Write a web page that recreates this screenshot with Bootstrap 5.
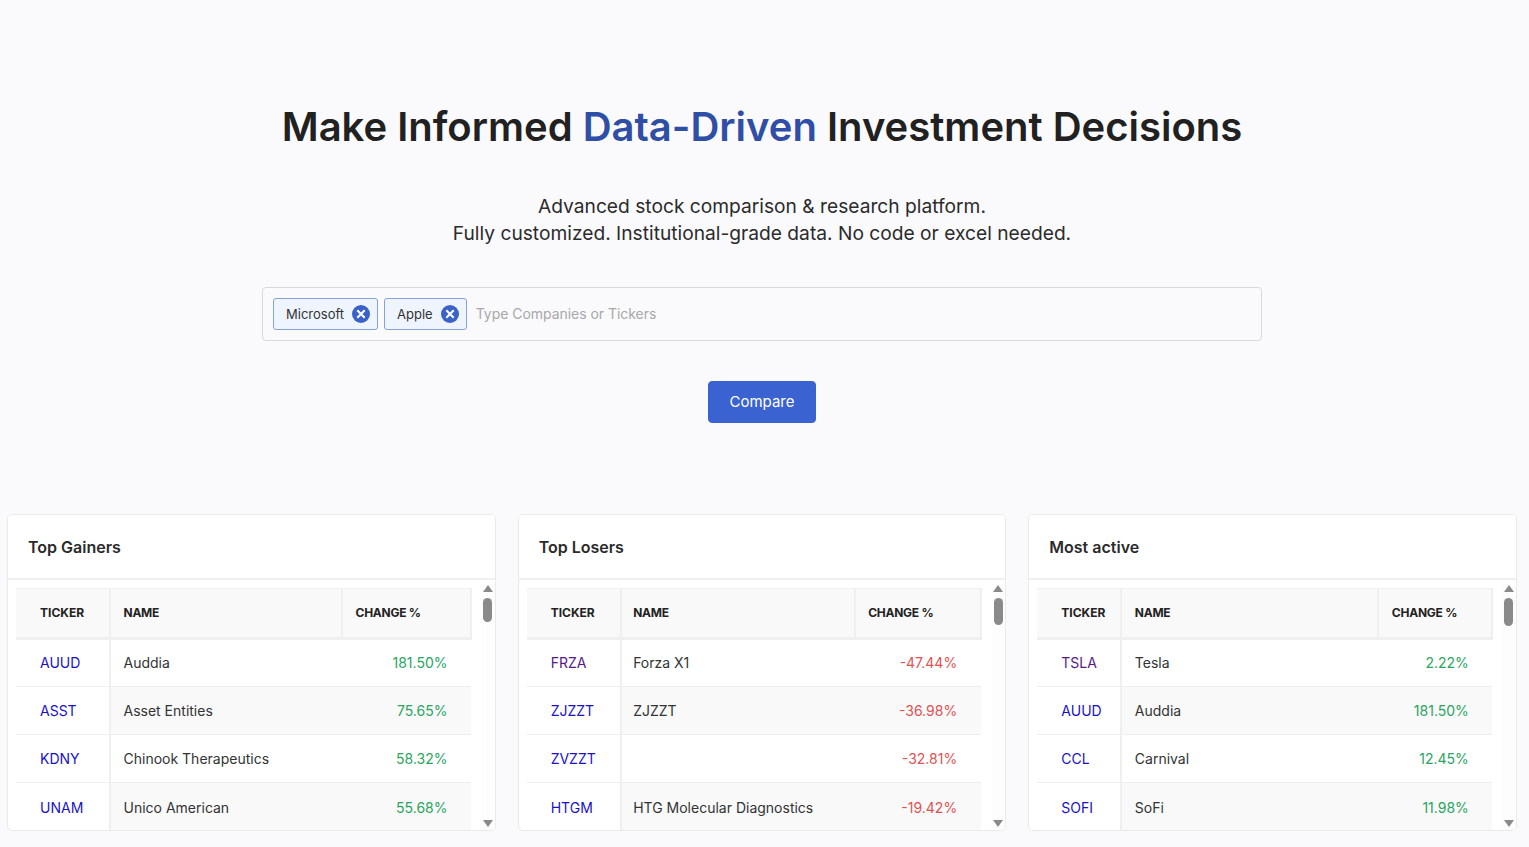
<!doctype html>
<html lang="en">

<head>
    <meta charset="utf-8">
    <meta name="viewport" content="width=device-width, initial-scale=1">
    <title>Stock Compare</title>
    <link href="https://cdn.jsdelivr.net/npm/bootstrap@5.3.0/dist/css/bootstrap.min.css" rel="stylesheet">
    <style>
        body {
            background-color: #fafafc;
            font-family: "Inter", "Liberation Sans", sans-serif;
            color: #212529;
            overflow: hidden;
        }

        .page-wrap {
            width: 1524px;
            padding: 0 7px;
        }

        .hero-title {
            font-size: 40px;
            font-weight: 600;
            line-height: 48px;
            margin: 103px 0 0;
            color: #212121;
        }

        .hero-title span {
            color: #2f4ea6;
        }

        .hero-sub {
            font-size: 19.2px;
            line-height: 27px;
            margin: 42px 0 0;
            color: #2b2b2b;
        }

        .search-box {
            width: 1000px;
            height: 54px;
            margin: 40px auto 0;
            padding: 0 10px;
            border: 1px solid #d8d9de;
            border-radius: 4px;
            gap: 6px;
        }

        .chip {
            height: 32px;
            padding: 1px 7px 0 12px;
            background-color: #eef5fe;
            border: 1px solid #84a3dc;
            border-radius: 3px;
            font-size: 13px;
            color: #333;
            gap: 8px;
        }

        .chip svg {
            width: 18px;
            height: 18px;
            margin-top: -1px;
        }

        .placeholder-text {
            font-size: 14px;
            letter-spacing: -.04px;
            color: #a8a8a8;
            margin: -1px 0 0 3px;
        }

        .compare-btn {
            width: 108px;
            height: 42px;
            margin-top: 40px;
            font-size: 15px;
            background-color: #3a62d1;
            border-color: #3a62d1;
            border-radius: 4px;
        }

        .boards {
            display: grid;
            grid-template-columns: repeat(3, 1fr);
            gap: 22px;
            margin-top: 91px;
        }

        .board {
            height: 317px;
            border: 1px solid #e9e9ee;
            border-radius: 5px;
            overflow: hidden;
            background-color: #fff;
        }

        .board-head {
            height: 65px;
            padding: 2px 20px 0;
            background-color: #fff;
            border-bottom: 2px solid #f0f0f2;
            font-size: 16px;
            font-weight: 600;
            color: #2b2b2b;
        }

        .board-body {
            min-height: 0;
            padding: 8px 0 0 8px;
        }

        .stock-table {
            table-layout: fixed;
            font-size: 14px;
            margin: 0;
            color: #333;
        }

        .stock-table th {
            height: 50px;
            padding: 0 0 0 12.5px;
            font-size: 12px;
            font-weight: 700;
            letter-spacing: -.25px;
            vertical-align: middle;
            background-color: #f9f9f9;
            border-top: 1px solid #f0f0f0;
            border-bottom: 3px solid #efefef;
            border-right: 2px solid #efefef;
            color: #222;
            white-space: nowrap;
        }

        .stock-table td {
            height: 48.3px;
            padding: 0 0 0 12.5px;
            vertical-align: middle;
            border-bottom: 1px solid #eeeeee;
            background-color: #fff;
        }

        .stock-table tbody tr:nth-child(even) td {
            background-color: #f9f9f9;
        }

        .stock-table tbody tr td.tick-cell {
            background-color: #fff;
            padding-left: 24px;
            border-right: 2px solid #efefef;
        }

        .stock-table th.tick-cell {
            padding-left: 24px;
            letter-spacing: 0;
        }

        .stock-table td.chg-cell {
            text-align: right;
            padding: 0 23.5px 0 0;
        }

        .stock-table a {
            color: #1a12c8;
            text-decoration: none;
        }

        .stock-table a.seen {
            color: #551a8b;
        }

        .up {
            color: #2aa561;
        }

        .down {
            color: #e05252;
        }

        .t1 { width: 455px; }
        .t1 .c1 { width: 94px; }
        .t1 .c2 { width: 232px; }
        .t1 .c3 { width: 129px; }
        .t2 { width: 454px; }
        .t2 .c1 { width: 94px; }
        .t2 .c2 { width: 234px; }
        .t2 .c3 { width: 126px; }
        .t2 th:nth-child(2),
        .t2 td:nth-child(2) { padding-left: 11.5px; }
        .t3 { width: 455px; }
        .t3 .c1 { width: 84px; }
        .t3 .c2 { width: 257px; }
        .t3 .c3 { width: 114px; }

        .fake-scroll {
            width: 14px;
            margin-left: auto;
            margin-top: -4px;
            margin-right: 0;
            background-color: #fdfdfd;
        }

        .arrow-up,
        .arrow-down {
            width: 0;
            height: 0;
            border-left: 5px solid transparent;
            border-right: 5px solid transparent;
        }

        .arrow-up {
            border-bottom: 7px solid #8a8a8a;
            margin: 1px 0 0 0;
        }

        .arrow-down {
            border-top: 7px solid #8a8a8a;
            margin: auto 0 3px 0;
        }

        .thumb {
            width: 9px;
            margin-top: 6px;
            background-color: #8a8a8a;
            border-radius: 5px;
        }

        .thumb-a { height: 24px; }
        .thumb-b { height: 27px; }
        .thumb-c { height: 28px; }
    </style>
</head>

<body>
    <div class="page-wrap">
        <h1 class="hero-title text-center">Make Informed <span>Data-Driven</span> Investment Decisions</h1>
        <p class="hero-sub text-center">Advanced stock comparison &amp; research platform.<br>Fully customized. Institutional-grade data. No code or excel needed.</p>

        <div class="search-box d-flex align-items-center">
            <div class="chip d-flex align-items-center">Microsoft
                <svg viewBox="0 0 18 18"><circle cx="9" cy="9" r="9" fill="#3a62c9"/><path d="M5.3 5.3l7.4 7.4M12.7 5.3l-7.4 7.4" stroke="#fff" stroke-width="2.1" fill="none"/></svg>
            </div>
            <div class="chip d-flex align-items-center">Apple
                <svg viewBox="0 0 18 18"><circle cx="9" cy="9" r="9" fill="#3a62c9"/><path d="M5.3 5.3l7.4 7.4M12.7 5.3l-7.4 7.4" stroke="#fff" stroke-width="2.1" fill="none"/></svg>
            </div>
            <span class="placeholder-text">Type Companies or Tickers</span>
        </div>

        <div class="text-center">
            <button type="button" class="btn btn-primary compare-btn">Compare</button>
        </div>

        <div class="boards">
            <div class="board d-flex flex-column">
                <div class="board-head d-flex align-items-center">Top Gainers</div>
                <div class="board-body d-flex flex-grow-1">
                    <table class="table stock-table t1">
                        <thead>
                            <tr><th class="tick-cell c1">TICKER</th><th class="c2">NAME</th><th class="c3">CHANGE %</th></tr>
                        </thead>
                        <tbody>
                            <tr><td class="tick-cell"><a href="#">AUUD</a></td><td>Auddia</td><td class="chg-cell up">181.50%</td></tr>
                            <tr><td class="tick-cell"><a href="#">ASST</a></td><td>Asset Entities</td><td class="chg-cell up">75.65%</td></tr>
                            <tr><td class="tick-cell"><a href="#">KDNY</a></td><td>Chinook Therapeutics</td><td class="chg-cell up">58.32%</td></tr>
                            <tr><td class="tick-cell"><a href="#">UNAM</a></td><td>Unico American</td><td class="chg-cell up">55.68%</td></tr>
                        </tbody>
                    </table>
                    <div class="fake-scroll d-flex flex-column align-items-center">
                        <div class="arrow-up"></div>
                        <div class="thumb thumb-a"></div>
                        <div class="arrow-down"></div>
                    </div>
                </div>
            </div>

            <div class="board d-flex flex-column">
                <div class="board-head d-flex align-items-center">Top Losers</div>
                <div class="board-body d-flex flex-grow-1">
                    <table class="table stock-table t2">
                        <thead>
                            <tr><th class="tick-cell c1">TICKER</th><th class="c2">NAME</th><th class="c3">CHANGE %</th></tr>
                        </thead>
                        <tbody>
                            <tr><td class="tick-cell"><a href="#" class="seen">FRZA</a></td><td>Forza X1</td><td class="chg-cell down">-47.44%</td></tr>
                            <tr><td class="tick-cell"><a href="#">ZJZZT</a></td><td>ZJZZT</td><td class="chg-cell down">-36.98%</td></tr>
                            <tr><td class="tick-cell"><a href="#">ZVZZT</a></td><td></td><td class="chg-cell down">-32.81%</td></tr>
                            <tr><td class="tick-cell"><a href="#">HTGM</a></td><td>HTG Molecular Diagnostics</td><td class="chg-cell down">-19.42%</td></tr>
                        </tbody>
                    </table>
                    <div class="fake-scroll d-flex flex-column align-items-center">
                        <div class="arrow-up"></div>
                        <div class="thumb thumb-b"></div>
                        <div class="arrow-down"></div>
                    </div>
                </div>
            </div>

            <div class="board d-flex flex-column">
                <div class="board-head d-flex align-items-center">Most active</div>
                <div class="board-body d-flex flex-grow-1">
                    <table class="table stock-table t3">
                        <thead>
                            <tr><th class="tick-cell c1">TICKER</th><th class="c2">NAME</th><th class="c3">CHANGE %</th></tr>
                        </thead>
                        <tbody>
                            <tr><td class="tick-cell"><a href="#" class="seen">TSLA</a></td><td>Tesla</td><td class="chg-cell up">2.22%</td></tr>
                            <tr><td class="tick-cell"><a href="#">AUUD</a></td><td>Auddia</td><td class="chg-cell up">181.50%</td></tr>
                            <tr><td class="tick-cell"><a href="#">CCL</a></td><td>Carnival</td><td class="chg-cell up">12.45%</td></tr>
                            <tr><td class="tick-cell"><a href="#">SOFI</a></td><td>SoFi</td><td class="chg-cell up">11.98%</td></tr>
                        </tbody>
                    </table>
                    <div class="fake-scroll d-flex flex-column align-items-center">
                        <div class="arrow-up"></div>
                        <div class="thumb thumb-c"></div>
                        <div class="arrow-down"></div>
                    </div>
                </div>
            </div>
        </div>
    </div>

    <script src="https://cdn.jsdelivr.net/npm/bootstrap@5.3.0/dist/js/bootstrap.bundle.min.js"></script>
</body>

</html>
